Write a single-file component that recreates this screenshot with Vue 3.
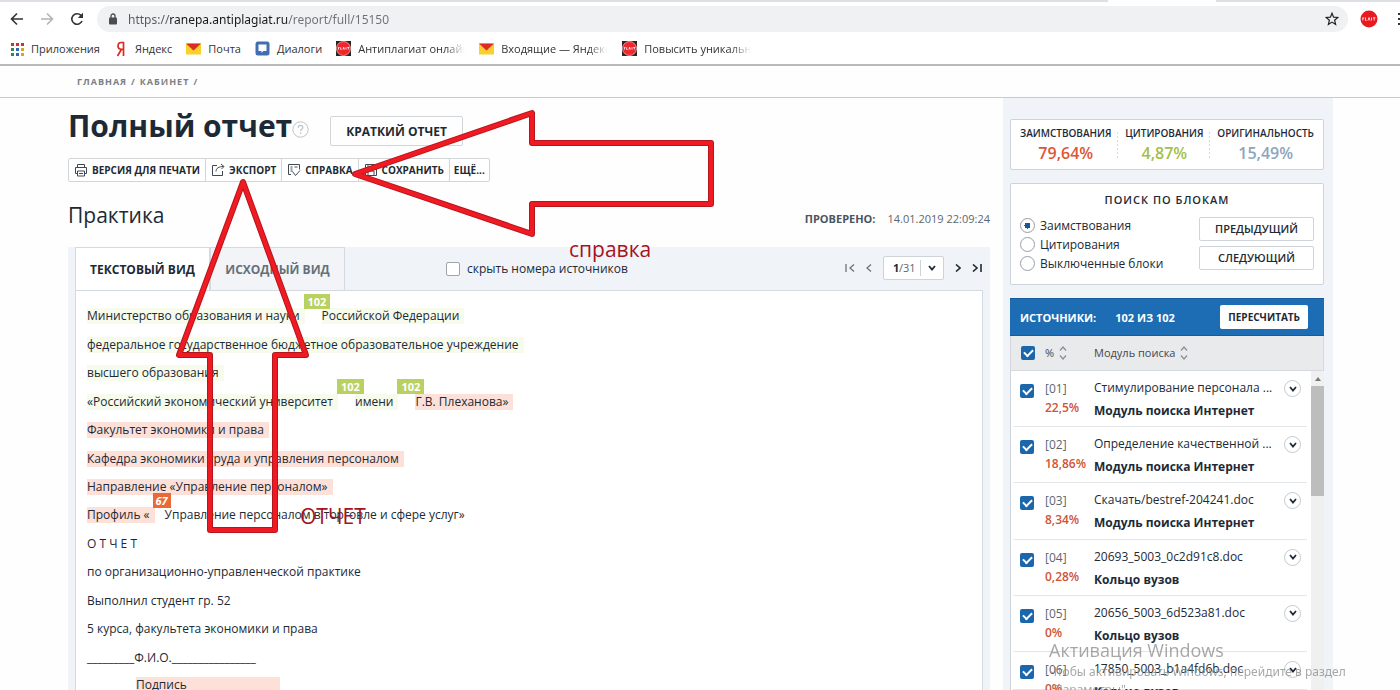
<script setup>
import { ref } from 'vue'

const bookmarks = [
  { icon: 'apps', text: 'Приложения' },
  { icon: 'ya', text: 'Яндекс' },
  { icon: 'mail', text: 'Почта' },
  { icon: 'chat', text: 'Диалоги' },
  { icon: 'stop', text: 'Антиплагиат онлайн', fade: true },
  { icon: 'mail', text: 'Входящие — Яндекс.Почта', fade: true },
  { icon: 'stop', text: 'Повысить уникальность', fade: true },
]

const appColors = ['#c5362c', '#c5362c', '#c5362c', '#2f8a4e', '#2f66b5', '#d9a520', '#2f8a4e', '#2f66b5', '#d9a520']

const lines = [
  [{ t: 'Министерство образования и науки', c: 'cite' }, { n: '102' }, { t: 'Российской Федерации', c: 'cite' }],
  [{ t: 'федеральное государственное бюджетное образовательное учреждение', c: 'cite' }],
  [{ t: 'высшего образования', c: 'cite' }],
  [{ t: '«Российский экономический университет', c: 'cite' }, { n: '102' }, { t: 'имени', c: 'cite' }, { n: '102' }, { t: 'Г.В. Плеханова»', c: 'loan' }],
  [{ t: 'Факультет экономики и права', c: 'loan' }],
  [{ t: 'Кафедра экономики труда и управления персоналом', c: 'loan' }],
  [{ t: 'Направление «Управление персоналом»', c: 'loan' }],
  [{ t: 'Профиль «', c: 'loan' }, { n: '67', hot: true }, { t: 'Управление персоналом в торговле и сфере услуг»' }],
  [{ t: 'О Т Ч Е Т' }],
  [{ t: 'по организационно-управленческой практике' }],
  [{ t: 'Выполнил студент гр. 52' }],
  [{ t: '5 курса, факультета экономики и права' }],
  [{ t: '_________Ф.И.О.________________' }],
  [{ t: 'Подпись', c: 'loan sign' }],
]

const sources = ref([
  { id: '01', p: '22,5%', name: 'Стимулирование персонала ...', mod: 'Модуль поиска Интернет', on: true },
  { id: '02', p: '18,86%', name: 'Определение качественной ...', mod: 'Модуль поиска Интернет', on: true },
  { id: '03', p: '8,34%', name: 'Скачать/bestref-204241.doc', mod: 'Модуль поиска Интернет', on: true },
  { id: '04', p: '0,28%', name: '20693_5003_0c2d91c8.doc', mod: 'Кольцо вузов', on: true },
  { id: '05', p: '0%', name: '20656_5003_6d523a81.doc', mod: 'Кольцо вузов', on: true },
  { id: '06', p: '0%', name: '17850_5003_b1a4fd6b.doc', mod: 'Кольцо вузов', on: true },
])

const url = ref('https://ranepa.antiplagiat.ru/report/full/15150')
const page = ref('1')
const hide = ref(false)
const all = ref(true)
const kind = ref('Заимствования')
const kinds = ['Заимствования', 'Цитирования', 'Выключенные блоки']
</script>

<template>
  <div class="window">
    <header class="chrome">
      <div class="tabstrip"><i></i></div>
      <div class="bar">
        <button class="nav" aria-label="Назад"><svg width="14" height="14" viewBox="0 0 14 14"><path d="M13 7H2M7 1.5 1.5 7 7 12.5" /></svg></button>
        <button class="nav off" aria-label="Вперёд"><svg width="14" height="14" viewBox="0 0 14 14"><path d="M1 7h11M7 1.5 12.500 7 7 12.500" /></svg></button>
        <button class="nav" aria-label="Обновить"><svg width="14" height="14" viewBox="0 0 14 14"><path d="M12 9A5.300 5.300 0 1 1 11 3.400L12.300 4.800" /><path class="fill" d="M13 .8V6H7.800z" /></svg></button>
        <div class="omni">
          <svg width="10" height="12" viewBox="0 0 10 12"><rect x="1" y="4.500" width="8" height="7" rx="1" fill="#4a4d51" /><path d="M3 5V3a2 2 0 0 1 4 0v2" fill="none" stroke="#4a4d51" stroke-width="1.300" /></svg>
          <input v-model="url" class="url" aria-label="Адрес" />
          <button class="star" aria-label="В закладки"><svg width="14" height="14" viewBox="0 0 14 14"><path d="M7 1.200 8.600 5.200l4.200.3-3.200 2.700 1 4.200L7 10.100l-3.600 2.300 1-4.200L1.200 5.500l4.200-.3z" fill="none" stroke="#222" stroke-width="1.200" /></svg></button>
        </div>
        <svg class="ext" width="18" height="18" viewBox="0 0 18 18"><circle cx="9" cy="9" r="8.500" fill="#e8191f" /><path d="M2.800 7.500v3M2.800 8h1.400M5.500 7.500v3h1M8 10.500 9 7.500l1 3M11.500 7.500v3M13 7.800h2.400M14.200 7.800v2.700" fill="none" stroke="#fff" stroke-width=".8" /></svg>
        <svg class="dots" width="3" height="14" viewBox="0 0 3 14"><path d="M1 1h2v2H1zM1 6h2v2H1zM1 11h2v2H1z" fill="#333" /></svg>
      </div>
      <nav class="marks">
        <a v-for="(b, i) in bookmarks" :key="i" href="#">
          <svg v-if="b.icon === 'apps'" width="14" height="14" viewBox="0 0 14 14"><rect v-for="(c, k) in appColors" :key="k" :x="1 + (k % 3) * 5" :y="1 + Math.floor(k / 3) * 5" width="3" height="3" :fill="c" /></svg>
          <svg v-else-if="b.icon === 'ya'" width="14" height="16" viewBox="0 0 14 16"><path d="M9.500 15V1.500H7.500C5.200 1.500 4 3 4 5c0 2.200 1 3.300 3.500 3.300h2M7.500 8.300 3.500 15" fill="none" stroke="#d82b22" stroke-width="1.700" /></svg>
          <svg v-else-if="b.icon === 'mail'" width="15" height="12" viewBox="0 0 15 12"><path d="M0 .500h15v11H0z" fill="#fbcf2c" /><path d="M0 .500h15L7.500 7.500z" fill="#dd2a22" /></svg>
          <svg v-else-if="b.icon === 'chat'" width="15" height="15" viewBox="0 0 15 15"><rect x=".5" y=".5" width="14" height="14" rx="2.500" fill="#3f6fb0" /><path d="M3.500 3.500h8v6.500H8.300L6.500 12v-2h-3z" fill="#fff" /></svg>
          <svg v-else width="15" height="15" viewBox="0 0 15 15"><path d="M0 0h15v15H0z" fill="#2c2426" /><circle cx="7.500" cy="7.500" r="7" fill="#f0262d" stroke="#f7c9c9" stroke-width=".7" /><path d="M2.500 6.300v2.200M2.500 6.500h1M4.700 6.300v2.200h.8M7 8.500l.7-2.200.7 2.200M10 6.300v2.200M11.300 6.500h2M12.300 6.500v2" fill="none" stroke="#fff" stroke-width=".8" /></svg>
          <span :class="{ fade: b.fade }">{{ b.text }}</span>
        </a>
      </nav>
    </header>

    <nav class="crumbs"><a href="#">ГЛАВНАЯ</a><span>/</span><a href="#">КАБИНЕТ</a><span>/</span></nav>

    <div class="page">
      <main>
        <div class="head">
          <h1>Полный отчет</h1>
          <svg class="help" width="17" height="17" viewBox="0 0 17 17"><circle cx="8.500" cy="8.500" r="7.700" fill="none" stroke="#bfc3c7" /><path d="M6.200 6.800c0-3.200 4.600-3 4.600-.3 0 1.600-2.200 1.700-2.200 3.500M8.600 11.300v1.500" fill="none" stroke="#bfc3c7" stroke-width="1.300" /></svg>
          <button class="short">КРАТКИЙ ОТЧЕТ</button>
        </div>
        <div class="tools">
          <button><svg width="14" height="14" viewBox="0 0 14 14"><path d="M3.500 4.500v-3h7v3M3.500 10.500h-2v-6h11v6h-2M3.500 8h7v5h-7zM5 10.500h4" /></svg>ВЕРСИЯ ДЛЯ ПЕЧАТИ</button>
          <button><svg width="14" height="14" viewBox="0 0 14 14"><path d="M6 2.500H1.500v10h10V8M5 8.500C5 5 8 3.500 12.500 3.500M10 1l3 2.500L10.500 6" /></svg>ЭКСПОРТ</button>
          <button><svg width="14" height="14" viewBox="0 0 14 14"><path d="M4 11.500H1.500v-10h11v5M3.500 4h2M3.500 6h2M3.500 8h2M7.500 4h3M5.500 8.500l3 4 4.500-5" /></svg>СПРАВКА</button>
          <button><svg width="14" height="14" viewBox="0 0 14 14"><path d="M1.500 1.500h9l2 2v9h-11zM4 1.500v3.500h6V1.500M4 12.500V8h6v4.500" /></svg>СОХРАНИТЬ</button>
          <button>ЕЩЁ...</button>
        </div>
        <div class="sub">
          <h2>Практика</h2>
          <p><b>ПРОВЕРЕНО:</b>14.01.2019 22:09:24</p>
        </div>
        <section class="panel">
          <div class="tabs">
            <button class="tab on">ТЕКСТОВЫЙ ВИД</button>
            <button class="tab">ИСХОДНЫЙ ВИД</button>
            <label class="hide"><input v-model="hide" type="checkbox" />скрыть номера источников</label>
            <div class="pager">
              <button class="off" aria-label="Первая"><svg width="10" height="8" viewBox="0 0 10 8"><path d="M1 0v8M9 .5 5 4l4 3.500" /></svg></button>
              <button class="off" aria-label="Предыдущая"><svg width="6" height="8" viewBox="0 0 6 8"><path d="M5 .5 1 4l4 3.500" /></svg></button>
              <div class="pick">
                <input v-model="page" aria-label="Страница" /><span>/31</span>
                <button aria-label="Выбрать страницу"><svg width="8" height="6" viewBox="0 0 8 6"><path d="M1 1l3 3.500L7 1" /></svg></button>
              </div>
              <button aria-label="Следующая"><svg width="6" height="8" viewBox="0 0 6 8"><path d="M1 .5 5 4 1 7.500" /></svg></button>
              <button aria-label="Последняя"><svg width="10" height="8" viewBox="0 0 10 8"><path d="M9 0v8M1 .5 5 4 1 7.500" /></svg></button>
            </div>
          </div>
          <article class="doc">
            <p v-for="(l, i) in lines" :key="i">
              <template v-for="(s, k) in l" :key="k">
                <a v-if="s.n" href="#" class="num" :class="{ hot: s.hot }"><i>{{ s.n }}</i></a>
                <span v-else :class="s.c">{{ s.t }}</span>
              </template>
            </p>
          </article>
        </section>
      </main>

      <aside>
        <section class="card stats">
          <div><h3>ЗАИМСТВОВАНИЯ</h3><strong class="red">79,64%</strong></div>
          <div><h3>ЦИТИРОВАНИЯ</h3><strong class="green">4,87%</strong></div>
          <div><h3>ОРИГИНАЛЬНОСТЬ</h3><strong class="blue">15,49%</strong></div>
        </section>
        <section class="card search">
          <h3>ПОИСК ПО БЛОКАМ</h3>
          <div class="cols">
            <div class="radios">
              <label v-for="k in kinds" :key="k"><input v-model="kind" type="radio" name="kind" :value="k" />{{ k }}</label>
            </div>
            <div class="btns"><button>ПРЕДЫДУЩИЙ</button><button>СЛЕДУЮЩИЙ</button></div>
          </div>
        </section>
        <section class="sources">
          <div class="shead"><b>ИСТОЧНИКИ:</b><b>102 ИЗ 102</b><button>ПЕРЕСЧИТАТЬ</button></div>
          <div class="scols">
            <input v-model="all" type="checkbox" aria-label="Все источники" />
            <button>%<svg width="8" height="14" viewBox="0 0 8 14"><path d="M1 4.500 4 1l3 3.500M1 9.500 4 13l3-3.500" /></svg></button>
            <button>Модуль поиска<svg width="8" height="14" viewBox="0 0 8 14"><path d="M1 4.500 4 1l3 3.500M1 9.500 4 13l3-3.500" /></svg></button>
          </div>
          <div class="body">
            <ul>
              <li v-for="s in sources" :key="s.id">
                <input v-model="s.on" type="checkbox" :aria-label="s.name" />
                <div class="pct"><span>[{{ s.id }}]</span><em>{{ s.p }}</em></div>
                <div class="name"><span>{{ s.name }}</span><b>{{ s.mod }}</b></div>
                <button aria-label="Подробнее"><svg width="8" height="6" viewBox="0 0 8 6"><path d="M1 1l3 3.500L7 1" /></svg></button>
              </li>
            </ul>
            <div class="scroll"><svg width="6" height="4" viewBox="0 0 6 4"><path d="M0 4 3 0l3 4z" fill="#777" /></svg><i></i></div>
          </div>
        </section>
      </aside>
    </div>

    <svg class="arrows" width="1400" height="690" viewBox="0 0 1400 690">
      <g v-for="w in 2" :key="w" :class="'w' + w">
        <path d="M355 174 532 113V143H711V204H532V234Z" />
        <path d="M243 182 179 355H210V530H275V355H306Z" />
      </g>
    </svg>
    <span class="note n1">справка</span>
    <span class="note n2">ОТЧЕТ</span>
    <div class="activate"><b>Активация Windows</b><span>Чтобы активировать Windows, перейдите в раздел</span><span>"Параметры".</span></div>
  </div>
</template>

<style>
body { margin: 0; }
</style>

<style scoped>
.window { position: relative; display: flex; flex-direction: column; height: 100vh; overflow: hidden; background: #fefefe; color: #1d2a35; font-family: "Open Sans", "Noto Sans", sans-serif; font-size: 12px; }
.window * { box-sizing: border-box; }
button, input { font: inherit; color: inherit; margin: 0; padding: 0; border: 0; background: none; }
a { color: inherit; text-decoration: none; }
h1, h2, h3, p, ul { margin: 0; padding: 0; }
i, em { font-style: normal; }
svg { display: block; flex: none; fill: none; }

.chrome { border-bottom: 2px solid #b9b9bb; height: 66px; flex: none; background: #fff; }
.tabstrip { height: 2px; background: #dcdfe3; display: flex; justify-content: flex-end; padding-right: 184px; }
.tabstrip i { width: 108px; background: #fff; }
.bar { display: flex; align-items: center; height: 34px; padding-left: 10px; }
.nav { width: 14px; margin-right: 16px; }
.nav path { stroke: #333; stroke-width: 1.6; }
.nav .fill { fill: #333; stroke: none; }
.nav.off path { stroke: #b3b3b3; }
.omni { flex: 1; height: 26px; margin-left: -3px; border-radius: 13px; background: #f0f1f3; display: flex; align-items: center; padding: 0 9px 0 11px; }
.url { flex: 1; margin-left: 10px; font-family: "Noto Sans", "Open Sans", sans-serif; font-size: 12px; outline: 0; -webkit-text-fill-color: transparent; background: linear-gradient(90deg, #55595e 42px, #16181a 42px 159px, #6c7075 159px); -webkit-background-clip: text; background-clip: text; }
.ext { margin: 0 19px 0 12px; }
.marks { display: flex; align-items: center; height: 25px; padding-left: 10px; font-size: 11px; color: #333; }
.marks a { display: flex; align-items: center; gap: 7px; margin-right: 14px; white-space: nowrap; }
.fade { width: 107px; overflow: hidden; -webkit-mask-image: linear-gradient(90deg, #000 87px, transparent 107px); mask-image: linear-gradient(90deg, #000 87px, transparent 107px); }

.crumbs { flex: none; display: flex; align-items: center; gap: 4px; height: 32px; padding-left: 77px; border-bottom: 1px solid #c9cacc; font-size: 9px; font-weight: 700; letter-spacing: 1px; color: #7b8084; }

.page { flex: 1; min-height: 0; display: flex; gap: 13px; padding: 0 67px 0 68px; }
main { flex: 1; min-width: 0; display: flex; flex-direction: column; }
.head { display: flex; align-items: center; margin-top: 6px; height: 44px; }
h1 { font-size: 30px; line-height: 44px; font-weight: 700; }
.help { margin: 6px 21px 0 0; }
.short { margin-top: 10px; height: 30px; padding: 0 15px; border: 1px solid #d3d6d9; border-radius: 2px; font-size: 12px; font-weight: 700; }
.tools { display: flex; align-self: flex-start; margin-top: 10px; height: 24px; border: 1px solid #d3d6d9; border-radius: 2px; background: #fff; }
.tools button { display: flex; align-items: center; gap: 4px; padding: 0 5px 0 5px; border-right: 1px solid #d3d6d9; font-size: 10px; font-weight: 700; white-space: nowrap; }
.tools button:last-child { border: 0; padding: 0 4px; }
.tools path { stroke: #3d4852; }
.sub { display: flex; align-items: center; justify-content: space-between; height: 65px; }
h2 { font-size: 21px; font-weight: 400; }
.sub p { font-size: 11px; color: #5d666e; margin-top: 8px; }
.sub b { font-weight: 700; margin-right: 12px; color: #4a555f; }
.panel { flex: 1; min-height: 0; background: #f0f4f9; padding: 0 7px; display: flex; flex-direction: column; }
.tabs { display: flex; align-items: stretch; height: 43px; }
.tab { width: 135px; border: 1px solid #d5dae0; border-bottom: 0; background: #f2f4f7; font-size: 12px; font-weight: 700; color: #64707b; white-space: nowrap; }
.tab.on { background: #fff; color: #1d2a35; }
.hide { display: flex; align-items: center; gap: 7px; margin-left: 101px; }
.hide input { appearance: none; width: 14px; height: 14px; border: 1px solid #9da4aa; border-radius: 2px; background: #fff; }
.pager { display: flex; align-items: center; gap: 11px; margin: 0 1px 2px auto; }
.pager path { stroke: #1d2a35; stroke-width: 1.6; }
.pager .off path { stroke: #6b747c; stroke-width: 1.3; }
.pick { display: flex; align-items: center; width: 61px; height: 24px; border: 1px solid #ced3d8; background: #fff; border-radius: 2px; font-size: 11px; color: #5d666e; }
.pick input { width: 15px; padding-left: 9px; font-weight: 700; color: #1d2a35; }
.pick button { height: 16px; margin-left: auto; padding: 0 7px; border-left: 1px solid #ced3d8; }
.doc { flex: 1; min-height: 0; display: grid; grid-template-rows: repeat(13, 1fr) 18px; padding: 11px 11px 0; background: #fff; border: 1px solid #d5dae0; border-bottom: 0; }
.doc p { display: flex; align-items: center; min-height: 0; white-space: pre; }
.doc p:last-child { align-items: flex-start; padding: 5px 0 0 49px; }
.doc span { line-height: 16px; }
.cite { background: #f6fbec; padding-right: 5px; }
.loan { background: #fde0d8; padding-right: 5px; }
.sign { width: 144px; }
.num { position: relative; align-self: stretch; width: 17px; }
.num i { position: absolute; left: -1px; top: -8px; height: 15px; padding: 0 4px; line-height: 15px; font-size: 11px; font-weight: 700; color: #fff; background: #b9d160; }
.num.hot { width: 10px; }
.num.hot i { left: -2px; padding: 0 3px; background: #ea6a35; font-style: italic; }

aside { width: 330px; flex: none; display: flex; flex-direction: column; padding: 21px 9px 0 7px; background: #f0f4f9; }
.card { border: 1px solid #cdd4db; border-radius: 2px; background: #fff; }
.stats { display: flex; height: 51px; padding: 0 9px; justify-content: space-between; margin-bottom: 13px; }
.stats div { text-align: center; }
.stats div + div { padding-left: 8px; background: repeating-linear-gradient(#d5dadf 0 2px, transparent 2px 4px) 0 12px / 1px 26px no-repeat; }
.stats h3 { margin-top: 6px; line-height: 14px; font-size: 10px; font-weight: 600; }
.stats strong { display: block; line-height: 26px; font-size: 16px; font-weight: 600; }
.red { color: #dc5536; }
.green { color: #a3bf4b; }
.blue { color: #8da5bd; }
.search { height: 102px; margin-bottom: 13px; padding: 8px 9px 0 9px; }
.search h3 { text-align: center; font-size: 11px; line-height: 16px; font-weight: 600; letter-spacing: 1px; }
.cols { display: flex; justify-content: space-between; margin-top: 8px; }
.radios label { display: flex; align-items: center; gap: 5px; height: 19px; }
.radios input { appearance: none; width: 15px; height: 15px; border: 1px solid #969ea6; border-radius: 50%; background: #fff; }
.radios input:checked { background: radial-gradient(circle, #1a5796 3px, #fff 3px); }
.btns { display: flex; flex-direction: column; gap: 5px; width: 115px; margin-top: 1px; }
.btns button { height: 24px; border: 1px solid #cdd4db; border-radius: 2px; font-size: 11px; line-height: 20px; font-weight: 600; }
.sources { flex: 1; min-height: 0; display: flex; flex-direction: column; }
.shead { flex: none; display: flex; align-items: center; height: 38px; padding: 0 16px 0 10px; background: #1d6db5; border: 1px solid #155a9c; border-width: 1px 0; color: #fff; font-size: 11px; }
.shead b + b { margin-left: 19px; }
.shead button { margin-left: auto; height: 24px; padding: 0 8px; border-radius: 2px; background: #fff; color: #1d2a35; font-size: 10px; font-weight: 700; }
.scols { flex: none; display: flex; align-items: center; height: 35px; padding: 0 0 1px 10px; background: #e9eaec; border: 1px solid #d5d9dd; border-top: 0; font-size: 11px; color: #3d4852; }
.scols button { display: flex; align-items: center; gap: 5px; width: 49px; margin-left: 10px; white-space: nowrap; }
.scols button + button { margin-left: 0; width: auto; }
.scols path { stroke: #858d95; stroke-width: 1.2; }
.sources input { flex: none; appearance: none; width: 14px; height: 14px; border-radius: 2px; background: #1c67ab; display: grid; place-items: center; }
.sources input:checked::after { content: ""; width: 7px; height: 4px; margin-top: -2px; border: solid #fff; border-width: 0 0 2px 2px; transform: rotate(-45deg); }
.body { flex: 1; min-height: 0; display: flex; background: #fff; border-left: 1px solid #cdd4db; }
.body ul { flex: 1; min-width: 0; display: grid; grid-template-rows: repeat(5, 1fr) 38px; list-style: none; margin: 0 4px 0 2px; }
.body li { display: flex; align-items: flex-start; min-height: 0; padding: 13px 6px 0 7px; border-bottom: 1px solid #e4e7ea; }
.pct { width: 49px; margin: -5px 0 0 11px; line-height: 19px; color: #5d666e; }
.pct span, .pct em, .name span, .name b { display: block; white-space: nowrap; }
.pct em { color: #cf5337; font-weight: 600; }
.name { flex: 1; min-width: 0; margin-top: -8px; line-height: 23px; }
.body li button { display: grid; place-items: center; width: 17px; height: 17px; margin-top: -4px; border: 1px solid #c3c9cf; border-radius: 50%; }
.body li button path { stroke: #1d2a35; stroke-width: 1.8; }
.pick button path { stroke-width: 1.8; }
.scroll { width: 13px; background: #f0f0f0; display: flex; flex-direction: column; align-items: center; padding-top: 6px; }
.scroll i { flex: none; width: 13px; height: 110px; margin-top: 5px; background: #bdbdbd; }

.arrows { position: absolute; left: 0; top: 0; pointer-events: none; }
.arrows path { stroke-linejoin: round; }
.w1 path { stroke: #b5151c; stroke-width: 6; }
.w2 path { stroke: #f01a23; stroke-width: 4; }
.note { position: absolute; font-size: 21px; line-height: 28px; color: #a5131c; pointer-events: none; }
.n1 { left: 569px; top: 235px; }
.n2 { left: 300px; top: 502px; }
.activate { position: absolute; left: 1049px; top: 638px; color: #8a8a8a; opacity: .75; white-space: nowrap; pointer-events: none; line-height: 17px; }
.activate b { display: block; font-size: 18px; line-height: 25px; font-weight: 400; }
.activate span { display: block; font-family: "Noto Sans", "Open Sans", sans-serif; font-size: 12px; line-height: 18px; }
</style>
